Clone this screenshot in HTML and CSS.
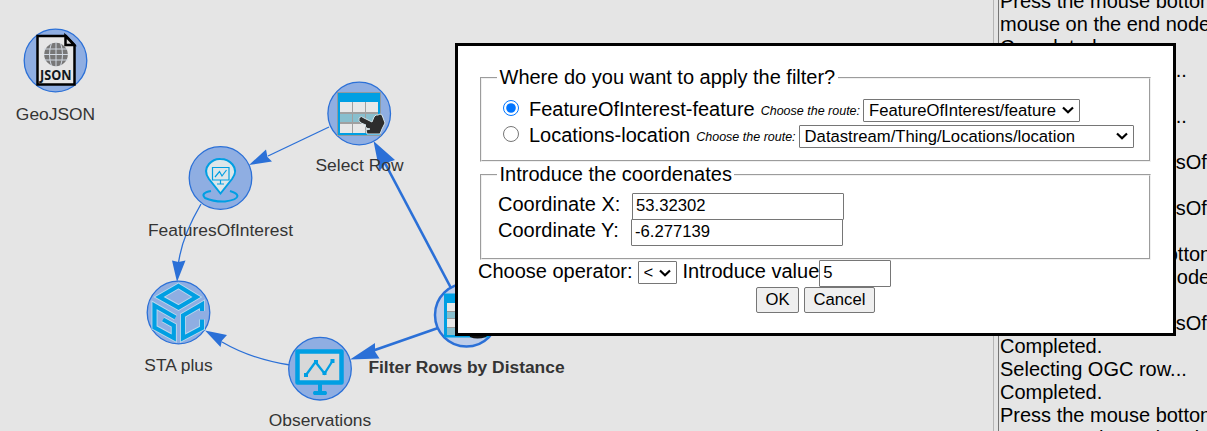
FILE: index.html
```html
<!DOCTYPE html>
<html lang="en">
<head>
<meta charset="utf-8">
<title>Filter Rows by Distance</title>
<link rel="stylesheet" href="styles.css">
</head>
<body>
<div class="workspace">
  <svg class="graph" width="994" height="431" viewBox="0 0 994 431">
    <defs>
      <g id="hand">
        <path d="M1 1Q3-2 6 1L14 5L16 0Q18-3 20-2Q22-4 24-2L27 6L24 12L22 17H9L8 13L12 12Q8 12 7 9L8 8L3 6Q0 4 1 1Z" class="hand"/>
      </g>
    </defs>
    <g class="edges">
      <path d="M329 127L268 156"/>
      <path d="M201 204Q180 240 178 268"/>
      <path d="M222 342Q251 359 290 365"/>
      <path class="strong" d="M451 288L378 150"/>
      <path class="strong" d="M438 328L372 351"/>
    </g>
    <g class="arrows">
      <path d="M249 165L266 149.500L267.500 157L272 161.500Z"/>
      <path d="M177 282L172 260.500L178.500 262L185.500 260.500Z"/>
      <path d="M205 330.500L227 335L222 340.500L220.500 347Z"/>
      <path d="M373.500 141L395 160L386 163L379.500 171Z"/>
      <path d="M350 359.500L375 343L375 351.500L379.500 358.500Z"/>
    </g>
    <g class="nodes">
      <circle cx="55.500" cy="60.500" r="31.300"/>
      <circle cx="359.200" cy="113.500" r="31.300"/>
      <circle cx="220.500" cy="178" r="31.300"/>
      <circle cx="178.500" cy="312.500" r="31.300"/>
      <circle cx="320" cy="368.700" r="31.300"/>
      <circle class="selected" cx="466.500" cy="315" r="31.500"/>
    </g>

    <g class="doc">
      <path class="sheet" d="M37.500 36H66L74.500 45V84.500H37.500Z"/>
      <path class="fold" d="M65.500 36V45H74Z"/>
      <circle class="globe" cx="56" cy="54.500" r="11.800"/>
      <path class="grid" d="M44 49H68M44 54.500H68M44 60H68M56 42V67M51.500 43Q47.500 54.500 51.500 66M60.500 43Q64.500 54.500 60.500 66"/>
      <text class="json" x="55.800" y="79.500" textLength="31.500" lengthAdjust="spacingAndGlyphs">JSON</text>
    </g>

    <g class="table">
      <path fill="#909aa0" d="M337 92H381V136H337Z"/>
      <path fill="#009fe3" d="M338 93H380V135H338Z"/>
      <path fill="#a0a0a0" d="M340 102H378V133H340Z"/>
      <path fill="#e8e8e8" d="M340 102H352V112H340ZM353 102H365V112H353ZM366 102H378V112H366ZM340 124H352V133H340ZM353 124H365V133H353ZM366 124H378V133H366Z"/>
      <path fill="#88bfce" d="M340 114H352V122H340ZM353 114H365V122H353ZM366 114H378V122H366Z"/>
      <use href="#hand" x="358" y="117"/>
    </g>

    <g class="pin">
      <path class="ring" d="M211 191Q200 193 205 198Q214 202 225 201.500Q237 200 237.500 196Q237 193 230 191"/>
      <path class="marker" d="M220.500 193.500L209 179Q203 171 209 164Q214 158.500 220.500 159Q228 159 232.500 164.500Q238 171 232 179Z"/>
      <path class="screen" d="M212.500 167.500H229V180H212.500ZM220.500 180V184M217 184H224M215 177L219.500 171.500L222 176L226.500 170"/>
    </g>

    <g class="cube">
      <path class="halo" d="M178.500 286L196.500 297L178.500 307.500L159.500 297ZM175.500 317.500L154.500 305.500V327.500L173.800 338V325.500L163 319.500M202 311V304.500L183 315.500V338L202 328V319.500"/>
      <path class="bars" d="M178.500 286L196.500 297L178.500 307.500L159.500 297ZM175.500 317.500L154.500 305.500V327.500L173.800 338V325.500L163 319.500M202 311V304.500L183 315.500V338L202 328V319.500"/>
    </g>

    <g class="monitor">
      <path fill="#d8d8d8" stroke="#009fe3" stroke-width="4.500" stroke-linejoin="round" d="M297.500 351.500H341.500V382.500H297.500Z"/>
      <path fill="#009fe3" d="M318 384H322V391H326Q328 393 326 395H314Q312 393 314 391H318Z"/>
      <path fill="none" stroke="#009fe3" stroke-width="2.300" d="M306 375L315.500 362L324.500 373.500L332.500 361"/>
      <path fill="#009fe3" d="M304 373h4v4h-4zM314 360h4v4h-4zM322.500 371h4v4h-4zM330.500 359h4v4h-4z"/>
    </g>

    <g class="table">
      <path fill="#009fe3" d="M444 293.500H489V337.500H444Z"/>
      <path fill="#e8e8e8" d="M447 303H485V311H447ZM447 319H485V327H447Z"/>
      <path fill="#88bfce" d="M447 312H485V318H447ZM447 328H485V335H447Z"/>
      <path stroke="#999" d="M447 311.500H485M447 318.500H485M447 327.500H485"/>
      <path fill="#111" d="M468 331H491L486 337Q477 340 470 337Z"/>
    </g>

    <g class="labels">
      <text x="55.500" y="120">GeoJSON</text>
      <text x="359.500" y="171">Select Row</text>
      <text x="220.500" y="236">FeaturesOfInterest</text>
      <text x="178.500" y="371">STA plus</text>
      <text x="320" y="426">Observations</text>
      <text class="bold" x="466.500" y="373">Filter Rows by Distance</text>
    </g>
  </svg>
  <div class="log">
    <p>Press the mouse botton</p>
    <p>mouse on the end node</p>
    <p>Completed.</p>
    <p>Selecting OGC row...</p>
    <p>Completed.</p>
    <p>Selecting OGC row...</p>
    <p>Completed.</p>
    <p>Connecting FeaturesOf</p>
    <p>Completed.</p>
    <p>Connecting FeaturesOf</p>
    <p>Completed.</p>
    <p>Press the mouse botton</p>
    <p>mouse on the end node</p>
    <p>Completed.</p>
    <p>Connecting FeaturesOf</p>
    <p>Completed.</p>
    <p>Selecting OGC row...</p>
    <p>Completed.</p>
    <p>Press the mouse botton</p>
    <p>mouse on the end node</p>
  </div>
</div>

<div class="dialog">
  <fieldset class="where">
    <legend>Where do you want to apply the filter?</legend>
    <div class="route">
      <input type="radio" name="place" id="foi" checked>
      <label for="foi">FeatureOfInterest-feature</label>
      <span class="hint">Choose the route:</span>
      <select class="feature"><option>FeatureOfInterest/feature</option></select>
    </div>
    <div class="route">
      <input type="radio" name="place" id="loc">
      <label for="loc">Locations-location</label>
      <span class="hint">Choose the route:</span>
      <select class="location"><option>Datastream/Thing/Locations/location</option></select>
    </div>
  </fieldset>
  <fieldset class="coords">
    <legend>Introduce the coordenates</legend>
    <div class="coord x"><label for="cx">Coordinate X:</label><input type="text" id="cx" value="53.32302"></div>
    <div class="coord y"><label for="cy">Coordinate Y:</label><input type="text" id="cy" value="-6.277139"></div>
  </fieldset>
  <div class="condition">
    <label for="op">Choose operator:</label>
    <select id="op" class="operator"><option>&lt;</option></select>
    <label for="val">Introduce value</label><input type="text" id="val" class="value" value="5">
  </div>
  <div class="actions">
    <button class="ok">OK</button>
    <button class="cancel">Cancel</button>
  </div>
</div>
</body>
</html>
```
FILE: styles.css
```css
* { box-sizing: border-box; }
body {
  margin: 0;
  height: 431px;
  overflow: hidden;
  background: #e5e5e5;
  color: #000;
  font: 20px/23px "Liberation Sans", Arial, sans-serif;
}
.workspace { display: flex; height: 431px; overflow: hidden; }
.graph { flex: none; display: block; }
.log {
  flex: 1;
  margin-left: 4px;
  border-left: 1px solid #767676;
  box-shadow: -4px 0 0 #e5e5e5, -5px 0 0 #b5b5b5;
  padding-left: 1px;
  white-space: nowrap;
  overflow: hidden;
  height: 480px;
  margin-top: -10px;
}
.log p { margin: 0; }

.edges path { fill: none; stroke: #2b70d7; stroke-width: 1.3; }
.edges .strong { stroke-width: 2.6; }
.arrows path { fill: #2b70d7; }
.nodes circle { fill: #8faee2; stroke: #2b70d7; stroke-width: 1.3; }
.nodes .selected { fill: #bfcee9; stroke-width: 2.5; }
.labels text { font-size: 17.4px; fill: #343434; text-anchor: middle; }
.labels .bold { font-weight: bold; }
.sheet { fill: #e6e6e6; stroke: #000; stroke-width: 2.5; }
.fold { fill: #ddd; stroke: #000; stroke-width: 2.5; }
.globe { fill: #777; }
.grid { fill: none; stroke: #d2d9e2; stroke-width: 1; }
.json { font: bold 14.5px "Open Sans", sans-serif; text-anchor: middle; fill: #111820; }
.hand { fill: #2d2d2d; stroke: #d5e5eb; stroke-width: 1; }
.ring { fill: none; stroke: #009fe3; stroke-width: 2; }
.marker { fill: #dce6e9; stroke: #009fe3; stroke-width: 2; }
.screen { fill: none; stroke: #009fe3; stroke-width: 1.2; }
.halo { fill: none; stroke: #b9d8ed; stroke-width: 6; }
.bars { fill: none; stroke: #009fe3; stroke-width: 4.2; }

.dialog {
  position: absolute;
  left: 455px;
  top: 43px;
  width: 721px;
  height: 293px;
  border: 3px solid #000;
  background: #fff;
  padding: 20px;
  white-space: nowrap;
}
fieldset {
  margin: 0 2px;
  padding: 0 15px 0 16px;
  border: 2px groove #f0f0f0;
}
legend { padding: 0 2.5px; margin-left: -1px; height: 23px; }
.where { height: 96px; }
.coords { height: 97px; margin-top: 1px; }
.route { display: flex; align-items: center; height: 26px; }
.where .route:nth-of-type(1) { margin-top: 7px; }
.route input { flex: none; width: 16px; height: 16px; margin: -3px 10px 0 5px; }
.hint { font-size: 12.5px; font-style: italic; margin: 4px 3px 0 6px; }
select, button, input[type="text"] {
  font: 16.667px "Liberation Sans", Arial, sans-serif;
  color: #000;
}
select {
  appearance: none;
  height: 23px;
  margin: 0;
  padding: 0 20px 0 5px;
  border: 1px solid #767676;
  border-radius: 1px;
  background: #fff url("data:image/svg+xml,%3Csvg xmlns='http://www.w3.org/2000/svg' width='12' height='8'%3E%3Cpath d='M1 1.500L6 6.300L11 1.500' fill='none' stroke='%23000' stroke-width='2.200'/%3E%3C/svg%3E") no-repeat right 5px center;
}
.route select { margin-top: 2px; }
.feature { width: 217px; }
.location { width: 335px; }
input[type="text"] { border: 1px solid #767676; border-radius: 1px; padding: 0 3px 2px; margin: 0; }
.coord { display: flex; height: 26px; }
.coord input { width: 212px; height: 27px; }
.coord.x { margin-top: 7px; }
.coord.x label { width: 134px; }
.coord.y label { width: 133px; }
.condition { display: flex; height: 27px; }
.operator { width: 39px; margin: 1px 6px 0 5px; }
.value { width: 72px; height: 27px; }
.actions { display: flex; justify-content: center; gap: 5px; }
button { height: 26px; padding: 0 0 1px; border: 1px solid #767676; border-radius: 2px; background: #efefef; }
.ok { width: 43px; }
.cancel { width: 71px; }
```
